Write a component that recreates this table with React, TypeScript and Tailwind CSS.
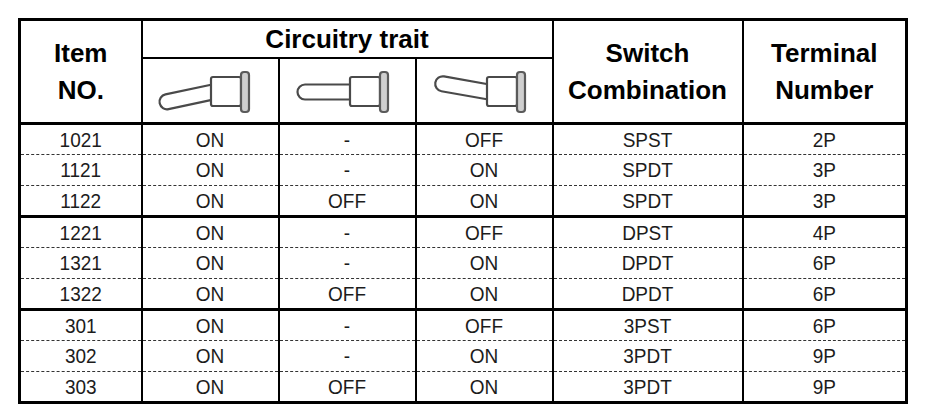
const rows = [
  ["1021", "ON", "-", "OFF", "SPST", "2P"],
  ["1121", "ON", "-", "ON", "SPDT", "3P"],
  ["1122", "ON", "OFF", "ON", "SPDT", "3P"],
  ["1221", "ON", "-", "OFF", "DPST", "4P"],
  ["1321", "ON", "-", "ON", "DPDT", "6P"],
  ["1322", "ON", "OFF", "ON", "DPDT", "6P"],
  ["301", "ON", "-", "OFF", "3PST", "6P"],
  ["302", "ON", "-", "ON", "3PDT", "9P"],
  ["303", "ON", "OFF", "ON", "3PDT", "9P"],
];

// toggle switch drawing, lever tilted by `angle` degrees
const Toggle = ({ angle, shift = 0 }: { angle: number; shift?: number }) => (
  <svg width="135" height="62" viewBox="0 0 135 62" className="block">
    <g transform={`translate(${shift} 0)`} fill="none" stroke="#4a4a4a" strokeWidth="2.2" strokeLinejoin="round">
      <path d="M74 25.5 H25 A7.5 7.5 0 0 0 25 40.5 H74" transform={`rotate(${angle} 72 33)`} fill="#fff" />
      <rect x="70" y="18" width="30" height="29" rx="2" fill="#fff" />
      <rect x="100" y="13" width="8" height="40" rx="3" fill="#cfcfcf" stroke="#5a5a5a" />
    </g>
  </svg>
);

export default function App() {
  return (
    <div className="min-h-[418px] w-[930px] bg-white pl-[18px] pt-[18px] font-['Liberation_Sans',Arial,sans-serif]">
      <table className="table-fixed border-collapse border-[3px] border-black">
        <colgroup>
          <col className="w-[122px]" />
          <col className="w-[136px]" />
          <col className="w-[136px]" />
          <col className="w-[135px]" />
          <col className="w-[190px]" />
          <col className="w-[164px]" />
        </colgroup>
        <thead className="text-[26px] font-bold leading-[37px] text-black">
          <tr className="h-[38px]">
            <th rowSpan={2} className="border-2 border-b-[3px] border-black p-0">
              Item
              <br />
              NO.
            </th>
            <th colSpan={3} className="border-2 border-black p-0 leading-[30px]">
              Circuitry trait
            </th>
            <th rowSpan={2} className="border-2 border-b-[3px] border-black p-0">
              Switch
              <br />
              Combination
            </th>
            <th rowSpan={2} className="border-2 border-b-[3px] border-black p-0">
              Terminal
              <br />
              Number
            </th>
          </tr>
          <tr className="h-[66px] border-b-[3px] border-black">
            <th className="border-2 border-b-[3px] border-black p-0">
              <Toggle angle={-12} shift={-2} />
            </th>
            <th className="border-2 border-b-[3px] border-black p-0">
              <Toggle angle={0} />
            </th>
            <th className="border-2 border-b-[3px] border-black p-0">
              <Toggle angle={10} />
            </th>
          </tr>
        </thead>
        <tbody className="text-[19px] text-[#1c1c1c]">
          {rows.map((r, i) => (
            <tr
              key={r[0]}
              className={
                i === 2 || i === 5
                  ? "h-[31px] border-b-[3px] border-solid border-black"
                  : "h-[31px] border-b border-dashed border-[#333]"
              }
            >
              {r.map((c, j) => (
                <td key={j} className="border-x-2 border-solid border-black p-0 text-center leading-[28px]">
                  <span className="inline-block scale-y-[1.1]">{c}</span>
                </td>
              ))}
            </tr>
          ))}
        </tbody>
      </table>
    </div>
  );
}
